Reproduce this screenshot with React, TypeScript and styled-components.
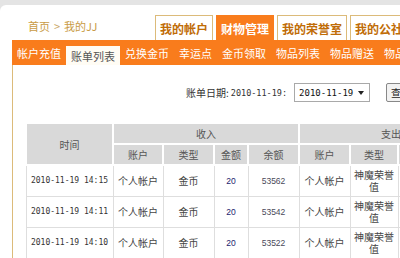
import styled, { createGlobalStyle } from "styled-components";

const GlobalStyle = createGlobalStyle`
  body {
    margin: 0;
    background: #e4e4e4;
    font-family: "Noto Sans CJK SC", "Liberation Sans", sans-serif;
  }
`;

const Page = styled.div`
  width: 400px;
  height: 258px;
  overflow: hidden;
`;

const Sheet = styled.div`
  margin-top: 5px;
  width: 560px;
  height: 253px;
  background: #fff;
  border-top-left-radius: 6px;
`;

const TopBar = styled.div`
  display: flex;
  align-items: flex-end;
  height: 35px;
`;

const Crumbs = styled.div`
  width: 155px;
  box-sizing: border-box;
  padding-left: 28px;
  align-self: center;
  margin-top: 6px;
  font-size: 11px;
  color: #c99b45;
`;

const Sep = styled.span`
  margin: 0 4px;
  color: #c9a766;
`;

const Tabs = styled.div`
  display: flex;
  gap: 3px;
`;

const Tab = styled.div<{ $active?: boolean }>`
  height: 25px;
  box-sizing: border-box;
  padding: 0 4px;
  display: flex;
  align-items: center;
  font-size: 12px;
  font-weight: 700;
  border: 1px solid ${(p) => (p.$active ? "#f97c1c" : "#dcbb7a")};
  border-bottom: 0;
  background: ${(p) => (p.$active ? "#f97c1c" : "#fff")};
  color: ${(p) => (p.$active ? "#fff" : "#c06c06")};
`;

const Panel = styled.div`
  margin-left: 12px;
  border-left: 1px solid #dcbb7a;
  height: 218px;
`;

const SubNav = styled.div`
  display: flex;
  align-items: flex-end;
  height: 25px;
  margin-left: -1px;
  background: #f97c1c;
`;

const SubTab = styled.div<{ $active?: boolean }>`
  height: ${(p) => (p.$active ? "19px" : "25px")};
  padding: 0 5px;
  display: flex;
  align-items: center;
  font-size: 11px;
  color: ${(p) => (p.$active ? "#555" : "#fff")};
  background: ${(p) => (p.$active ? "#fffcf4" : "transparent")};
`;

const Body = styled.div`
  padding: 18px 0 0 12px;
`;

const DateRow = styled.div`
  display: flex;
  align-items: center;
  height: 19px;
  padding-left: 161px;
  font-size: 10px;
  color: #333;
`;

const Mono = styled.span`
  font-family: "DejaVu Sans Mono", monospace;
  font-size: 8.5px;
  margin-left: 2px;
`;

const Select = styled.div`
  margin-left: 7px;
  width: 76px;
  height: 19px;
  box-sizing: border-box;
  border: 1px solid #a9a9a9;
  display: flex;
  align-items: center;
  justify-content: space-between;
  padding: 0 5px 0 4px;
  font-family: "DejaVu Sans Mono", monospace;
  font-size: 9px;
  color: #111;
`;

const Arrow = styled.span`
  width: 0;
  height: 0;
  border-left: 3px solid transparent;
  border-right: 3px solid transparent;
  border-top: 4px solid #222;
`;

const Button = styled.div`
  margin-left: 16px;
  height: 19px;
  box-sizing: border-box;
  padding: 0 4px;
  border: 1px solid #888;
  border-radius: 2px;
  background: #f2f2f2;
  display: flex;
  align-items: center;
  font-size: 10px;
  color: #222;
`;

const Table = styled.table`
  margin-top: 20px;
  border-collapse: collapse;
  table-layout: fixed;
  width: 457px;
`;

const Th = styled.th`
  background: #d9d9d9;
  border: 2px solid #fff;
  font-weight: 400;
  font-size: 10px;
  color: #555;
  padding: 0;
`;

const HeadRow = styled.tr`
  height: 21px;
`;

const Row = styled.tr`
  height: 31px;
`;

const Td = styled.td`
  border: 1px solid #dedede;
  text-align: center;
  font-size: 10px;
  line-height: 12px;
  color: #444;
  padding: 0 3px;
`;

const TimeCell = styled(Td)`
  font-family: "DejaVu Sans Mono", monospace;
  font-size: 8px;
  color: #333;
`;

const Amount = styled(Td)`
  font-family: "Liberation Sans", sans-serif;
  font-size: 8.5px;
  color: #1c1c6e;
`;

const Balance = styled(Td)`
  font-family: "Liberation Sans", sans-serif;
  font-size: 8.5px;
  color: #4a4a5a;
`;

const rows = [
  { time: "2010-11-19 14:15", balance: "53562" },
  { time: "2010-11-19 14:11", balance: "53542" },
  { time: "2010-11-19 14:10", balance: "53522" },
];

const subTabs = ["帐户充值", "账单列表", "兑换金币", "幸运点", "金币领取", "物品列表", "物品赠送", "物品回收"];

const colWidths = [87, 50, 51, 34, 51, 51, 48, 34, 51];

export default function App() {
  return (
    <Page>
      <GlobalStyle />
      <Sheet>
        <TopBar>
          <Crumbs>
            首页<Sep>&gt;</Sep>我的JJ
          </Crumbs>
          <Tabs>
            <Tab>我的帐户</Tab>
            <Tab $active>财物管理</Tab>
            <Tab>我的荣誉室</Tab>
            <Tab>我的公社</Tab>
          </Tabs>
        </TopBar>
        <Panel>
          <SubNav>
            {subTabs.map((t) => (
              <SubTab key={t} $active={t === "账单列表"}>
                {t}
              </SubTab>
            ))}
          </SubNav>
          <Body>
            <DateRow>
              账单日期:<Mono>2010-11-19:</Mono>
              <Select>
                2010-11-19
                <Arrow />
              </Select>
              <Button>查询</Button>
            </DateRow>
            <Table>
              <colgroup>
                {colWidths.map((w, i) => (
                  <col key={i} style={{ width: w }} />
                ))}
              </colgroup>
              <thead>
                <HeadRow>
                  <Th rowSpan={2}>时间</Th>
                  <Th colSpan={4}>收入</Th>
                  <Th colSpan={4}>支出</Th>
                </HeadRow>
                <HeadRow>
                  <Th>账户</Th>
                  <Th>类型</Th>
                  <Th>金额</Th>
                  <Th>余额</Th>
                  <Th>账户</Th>
                  <Th>类型</Th>
                  <Th>金额</Th>
                  <Th>余额</Th>
                </HeadRow>
              </thead>
              <tbody>
                {rows.map((r) => (
                  <Row key={r.time}>
                    <TimeCell>{r.time}</TimeCell>
                    <Td>个人帐户</Td>
                    <Td>金币</Td>
                    <Amount>20</Amount>
                    <Balance>{r.balance}</Balance>
                    <Td>个人帐户</Td>
                    <Td>神魔荣誉值</Td>
                    <Amount>20</Amount>
                    <Balance>180</Balance>
                  </Row>
                ))}
              </tbody>
            </Table>
          </Body>
        </Panel>
      </Sheet>
    </Page>
  );
}
